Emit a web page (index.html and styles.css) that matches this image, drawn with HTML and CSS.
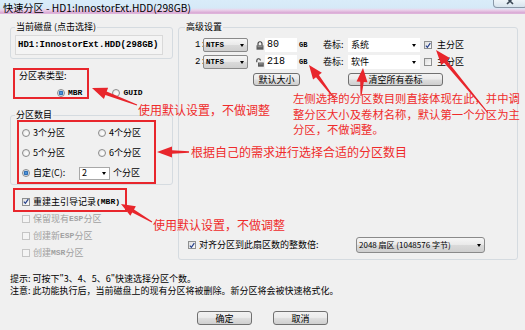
FILE: index.html
```html
<!doctype html>

<html lang="zh-CN">
  <head>
    <meta charset="utf-8"/>
    <title>快速分区</title>
    <link rel="stylesheet" href="styles.css">
  </head>
  <body>
    <div class="window">
      <div class="titlebar">
        <span class="titlebar__text">快速分区 - HD1:InnostorExt.HDD(298GB)</span>
        <span class="titlebar__close">
          <svg width="8" height="6" viewBox="0 0 8 6"><path d="M1 -2L7 4M7 -2L1 4" stroke="#3b4856" stroke-width="1.6"/></svg>
        </span>
      </div>

      <div class="dialog">
        <div class="dialog__main">
          <div class="left">
            <fieldset class="group group_disk">
              <legend class="group__title">当前磁盘 (点击选择)</legend>
              <div class="disk">HD1:InnostorExt.HDD(298GB)</div>
            </fieldset>

            <div class="table-type">
              <div class="table-type__label">分区表类型:</div>
              <div class="table-type__options">
                <span class="option"><span class="radio radio_checked"></span><span class="latin">MBR</span></span>
                <span class="option option_gap"><span class="radio"></span><span class="latin">GUID</span></span>
              </div>
            </div>

            <fieldset class="group group_count">
              <legend class="group__title">分区数目</legend>
              <div class="count">
                <span class="option"><span class="radio"></span>3个分区</span>
                <span class="option"><span class="radio"></span>4个分区</span>
                <span class="option"><span class="radio"></span>5个分区</span>
                <span class="option"><span class="radio"></span>6个分区</span>
                <span class="option count__custom">
                  <span class="radio radio_checked"></span>
                  <span class="count__label">自定(C):</span>
                  <span class="combo combo_field combo_num">2<i class="combo__arrow"></i></span>
                  <span class="count__unit">个分区</span>
                </span>
              </div>
            </fieldset>

            <div class="checks">
              <span class="option check-row">
                <span class="check"><svg width="7" height="7" viewBox="0 0 7 7"><path d="M1 3.6L2.8 5.6L6.2 0.8" fill="none" stroke="#25408a" stroke-width="1.4"/></svg></span>
                重建主引导记录<span class="latin">(MBR)</span>
              </span>
              <span class="option check-row option_disabled"><span class="check"></span>保留现有<span class="latin">ESP</span>分区</span>
              <span class="option check-row option_disabled"><span class="check"></span>创建新<span class="latin">ESP</span>分区</span>
              <span class="option check-row option_disabled"><span class="check"></span>创建<span class="latin">MSR</span>分区</span>
            </div>
          </div>

          <fieldset class="group group_advanced">
            <legend class="group__title">高级设置</legend>

            <div class="part">
              <span class="part__num">1:</span>
              <span class="combo combo_fs"><span class="latin latin_small">NTFS</span><i class="combo__arrow"></i></span>
              <svg class="lock" width="8" height="9" viewBox="0 0 8 9">
                <path d="M2 4.5V2.8a2 2 0 0 1 4 0V4.5" fill="none" stroke="#3a3a3a" stroke-width="1.1"/>
                <rect x="0.5" y="4.3" width="7" height="4.4" fill="#5d5d5d"/>
                <rect x="1.5" y="5.2" width="5" height="1" fill="#9a9a9a"/>
              </svg>
              <span class="field">80</span>
              <span class="unit">GB</span>
              <span class="part__vol">卷标:</span>
              <span class="combo combo_field combo_vol">系统<i class="combo__arrow"></i></span>
              <span class="check"><svg width="7" height="7" viewBox="0 0 7 7"><path d="M1 3.6L2.8 5.6L6.2 0.8" fill="none" stroke="#25408a" stroke-width="1.4"/></svg></span>
              <span class="part__main">主分区</span>
            </div>

            <div class="part">
              <span class="part__num">2:</span>
              <span class="combo combo_fs"><span class="latin latin_small">NTFS</span><i class="combo__arrow"></i></span>
              <svg class="lock" width="8" height="9" viewBox="0 0 8 9">
                <path d="M0.8 4.2V2.6a1.8 1.8 0 0 1 3.6 0" fill="none" stroke="#3a3a3a" stroke-width="1.1"/>
                <rect x="2" y="4.5" width="5.8" height="4.2" fill="#5d5d5d"/>
                <rect x="3" y="5.4" width="3.8" height="1" fill="#9a9a9a"/>
              </svg>
              <span class="field">218</span>
              <span class="unit">GB</span>
              <span class="part__vol">卷标:</span>
              <span class="combo combo_field combo_vol">软件<i class="combo__arrow"></i></span>
              <span class="check"></span>
              <span class="part__main">主分区</span>
            </div>

            <div class="part-buttons">
              <button class="btn btn_size">默认大小</button>
              <button class="btn btn_clear">清空所有卷标</button>
            </div>

            <div class="align">
              <span class="option">
                <span class="check"><svg width="7" height="7" viewBox="0 0 7 7"><path d="M1 3.6L2.8 5.6L6.2 0.8" fill="none" stroke="#25408a" stroke-width="1.4"/></svg></span>
                对齐分区到此扇区数的整数倍:
              </span>
              <span class="combo combo_sector">2048 扇区 (1048576 字节)<i class="combo__arrow"></i></span>
            </div>
          </fieldset>
        </div>

        <p class="hints">
          提示: 可按下"3、4、5、6"快速选择分区个数。<br>
          注意: 此功能执行后，当前磁盘上的现有分区将被删除。新分区将会被快速格式化。
        </p>

        <div class="actions">
          <button class="btn btn_dialog">确定</button>
          <button class="btn btn_dialog">取消</button>
        </div>
      </div>

      <div class="notes">
        <svg class="notes__marks" width="525" height="330" viewBox="0 0 525 330">
          <g fill="none" stroke="#e8262c" stroke-width="2">
            <rect x="14" y="69" width="74" height="29"/>
            <rect x="18" y="121" width="137" height="62"/>
            <rect x="14" y="189" width="112" height="22"/>
          </g>
          <g fill="#e8262c">
            <polygon points="137.18,104.53 106.67,91.62 108.15,87.69 92,88 103.91,98.91 105.39,94.98 136.82,105.47"/>
            <polygon points="334.4,97.7 318.89,75.07 321.83,72.84 309,65 313.07,79.48 316.02,77.25 333.6,98.3"/>
            <polygon points="361.5,96.04 363.8,82.1 367.49,82.36 363,68 356.51,81.58 360.2,81.84 360.5,95.96"/>
            <polygon points="488.39,112.68 446.94,60.42 449.79,58.07 436,50 441.31,65.07 444.16,62.72 487.61,113.32"/>
            <polygon points="189,151.3 172,150.2 172,146.5 157,152 172,157.5 172,153.8 189,152.7"/>
            <polygon points="152.25,221.57 134.01,209.47 135.87,206.27 121,204 130.35,215.79 132.21,212.59 151.75,222.43"/>
          </g>
        </svg>
        <p class="note note_table">使用默认设置，不做调整</p>
        <p class="note note_parts">左侧选择的分区数目则直接体现在此，并中调<br>整分区大小及卷材名称，默认第一个分区为主<br>分区，不做调整。</p>
        <p class="note note_count">根据自己的需求进行选择合适的分区数目</p>
        <p class="note note_mbr">使用默认设置，不做调整</p>
      </div>
    </div>
  </body>
</html>
```

FILE: styles.css
```css
* {
  box-sizing: border-box;
}
body {
  margin: 0;
  background-color: #f0f0f0;
  font-family: "Noto Sans CJK SC", "Liberation Sans", sans-serif;
  font-size: 9px;
  line-height: 10px;
  color: #000;
}
.window {
  position: relative;
  width: 525px;
  height: 330px;
  overflow: hidden;
  background-color: #f0f0f0;
}
.titlebar {
  display: flex;
  height: 14px;
  background: linear-gradient(#d9ecf9 0, #d6e9f7 8px, #ebd2ea 10px, #d8a6d3 13px, #e4c0e1 14px);
}
.titlebar__text {
  padding: 1px 0 0 3px;
  font-size: 10.2px;
  line-height: 13px;
  white-space: nowrap;
}
.titlebar__close {
  display: flex;
  justify-content: center;
  margin-left: auto;
  margin-right: -2px;
  width: 34px;
  height: 8px;
  border: 1px solid #8a98a8;
  border-top: 0;
  border-radius: 0 0 4px 4px;
  background: linear-gradient(#eef4f9, #d8e4ee);
}
.dialog {
  padding: 8px 7px 0 10px;
}
.dialog__main {
  display: flex;
  gap: 5px;
}
.left {
  width: 163px;
}
.group {
  margin: 0;
  border: 1px solid #d5dbe0;
  border-radius: 3px;
}
.group__title {
  padding: 0 1px;
  line-height: 10px;
}
.group_disk {
  padding: 0 4px 3px;
}
.disk {
  margin-top: 3px;
  width: 148px;
  height: 20px;
  padding-left: 2px;
  border: 1px solid #d9d9d9;
  background-color: #f4f4f4;
  font: bold 9px/18px "Liberation Mono", monospace;
  white-space: nowrap;
}
.latin {
  font-family: "Liberation Mono", monospace;
  font-weight: bold;
  font-size: 8px;
}
.latin_small {
  font-size: 7.5px;
}
.option {
  display: flex;
  align-items: center;
  white-space: nowrap;
}
.option_gap {
  margin-left: 30px;
}
.option_disabled {
  color: #a0a0a0;
}
.radio {
  flex: none;
  width: 8px;
  height: 8px;
  margin-right: 3px;
  border: 1px solid #8b8b8b;
  border-radius: 50%;
  background: radial-gradient(circle at 60% 60%, #fff 0, #e6e6e6 80%);
}
.radio_checked {
  background: radial-gradient(circle, #6aaef0 0, #1d5fa8 2px, #dce9f5 2.6px, #f4f4f4 4px);
}
.check {
  display: flex;
  flex: none;
  align-items: center;
  justify-content: center;
  width: 8px;
  height: 8px;
  margin-right: 3px;
  border: 1px solid #8e8f8f;
  background: linear-gradient(135deg, #dedede, #fbfbfb);
}
.check svg {
  display: block;
}
.option_disabled .check {
  border-color: #c5c5c5;
  background: #f4f4f4;
}
.table-type {
  padding: 12px 0 0 9px;
}
.table-type__options {
  display: flex;
  align-items: center;
  height: 10px;
  margin-top: 7px;
  padding-left: 38px;
}
.group_count {
  margin-top: 12px;
  padding: 0 4px 1px;
}
.count {
  display: grid;
  grid-template-columns: 76px auto;
  grid-auto-rows: 20px;
  align-items: center;
  margin: 3px 0 0 7px;
}
.count__custom {
  grid-column: 1 / -1;
}
.count__label {
  width: 46px;
}
.count__unit {
  margin-left: 3px;
}
.checks {
  margin-top: 8px;
  padding-left: 12px;
}
.check-row {
  height: 17px;
}
.combo {
  display: flex;
  align-items: center;
  height: 14px;
  padding-left: 2px;
  border: 1px solid #8a8a8a;
  border-radius: 2px;
  background: linear-gradient(#f6f6f6, #e9e9e9 50%, #dadada 51%, #cfcfcf);
  white-space: nowrap;
}
.combo__arrow {
  margin-left: auto;
  margin-right: 3px;
  border-left: 2.5px solid transparent;
  border-right: 2.5px solid transparent;
  border-top: 3px solid #000;
}
.combo_field {
  border-color: #fff;
  border-radius: 0;
  background: #fff;
}
.combo_num {
  width: 31px;
  height: 13px;
  border-color: #a8a8a8;
}
.group_advanced {
  display: flex;
  flex-direction: column;
  width: 340px;
  height: 238px;
  padding: 0 6px 6px;
}
.part {
  display: flex;
  align-items: center;
  height: 14px;
  margin: 6px 0 0 10px;
}
.part + .part {
  margin-top: 3px;
}
.part__num {
  width: 8px;
  font: 9px "Liberation Mono", monospace;
}
.combo_fs {
  width: 45px;
}
.lock {
  flex: none;
  margin-left: 8px;
}
.field {
  width: 32px;
  height: 14px;
  margin-left: 1px;
  padding-left: 2px;
  background-color: #fff;
  font: 10px/14px "Liberation Mono", monospace;
}
.unit {
  width: 10px;
  margin-left: 2px;
  font: bold 7px "Liberation Mono", monospace;
}
.part__vol {
  width: 25px;
  margin-left: 14px;
}
.combo_vol {
  width: 72px;
}
.part .check {
  margin-left: 4px;
}
.part__main {
  margin-left: 2px;
}
.part-buttons {
  display: flex;
  margin: 4px 0 0 68px;
}
.btn {
  height: 13px;
  padding: 0;
  border: 1px solid #707070;
  border-radius: 3px;
  background: linear-gradient(#f2f2f2, #ebebeb 45%, #dddddd 55%, #cfcfcf);
  font-family: inherit;
  font-size: 9px;
  line-height: 11px;
  color: #000;
}
.btn_size {
  width: 47px;
}
.btn_clear {
  width: 95px;
  margin-left: 48px;
}
.align {
  display: grid;
  grid-template-columns: 168px 129px;
  align-items: center;
  height: 16px;
  margin: auto 0 0 3px;
}
.combo_sector {
  height: 16px;
  border-radius: 3px;
  font-size: 8px;
}
.hints {
  margin: 12px 0 0;
  line-height: 12px;
  white-space: nowrap;
}
.actions {
  display: flex;
  justify-content: center;
  gap: 21px;
  margin-top: 14px;
  padding-right: 3px;
}
.btn_dialog {
  width: 55px;
  height: 14px;
}
.notes {
  position: absolute;
  top: 0;
  left: 0;
  width: 525px;
  height: 330px;
  pointer-events: none;
}
.notes__marks {
  position: absolute;
  top: 0;
  left: 0;
}
.note {
  position: absolute;
  margin: 0;
  color: #ef2b2b;
  font-size: 12px;
  line-height: 14px;
  white-space: nowrap;
}
.note_table {
  left: 138px;
  top: 103px;
}
.note_parts {
  left: 293px;
  top: 91px;
  font-size: 11.35px;
  line-height: 15.5px;
}
.note_count {
  left: 191px;
  top: 145px;
}
.note_mbr {
  left: 153px;
  top: 218px;
}
```
